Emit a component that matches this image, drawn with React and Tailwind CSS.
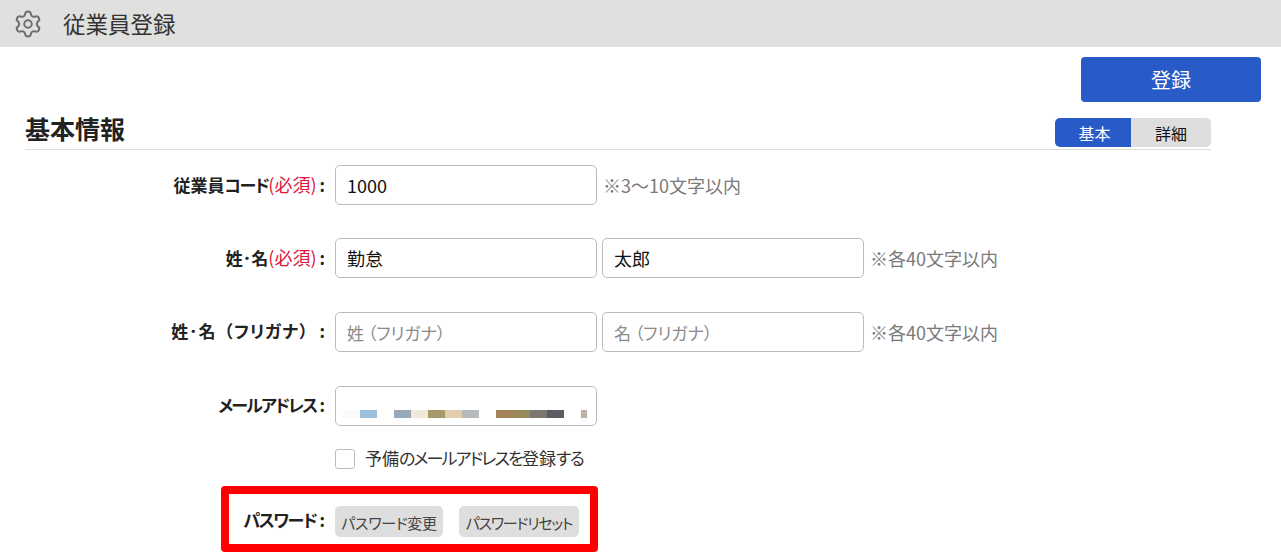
import React from 'react';
import { Settings } from 'lucide-react';

const inputCls = "w-[262px] h-10 box-border border border-[#bdbdbd] rounded-[5px] px-[11px] pb-[1px] text-[18px] text-[#111] placeholder:text-[#8a8a8a] placeholder:text-[17px] outline-none bg-white";

const mosaic = [
  ['w-[17px]', 'bg-[#f7fbfe]'],
  ['w-[17px]', 'bg-[#9dbfd9]'],
  ['w-[17px]', 'bg-white'],
  ['w-[17px]', 'bg-[#97a9b8]'],
  ['w-[17px]', 'bg-[#f0e8d9]'],
  ['w-[17px]', 'bg-[#a69a6d]'],
  ['w-[17px]', 'bg-[#e2cdaa]'],
  ['w-[17px]', 'bg-[#b6babd]'],
  ['w-[17px]', 'bg-white'],
  ['w-[17px]', 'bg-[#a5835b]'],
  ['w-[17px]', 'bg-[#958a58]'],
  ['w-[17px]', 'bg-[#7b7670]'],
  ['w-[17px]', 'bg-[#5d5c64]'],
  ['w-[17px]', 'bg-white'],
  ['w-[6px]', 'bg-[#bdb3a3]'],
];

// kana in the reference font is much narrower than in Noto
function Kana({ children }){
  return <span className="tracking-[-1.4px]">{children}</span>;
}

function Paren({ children }){
  return <span className="[font-feature-settings:normal]">{children}</span>;
}

function Row({ label, required, className, labelCls = '-mt-[2px]', children }){
  return (
    <div className={`flex items-center ${className}`}>
      <label className={`w-[325px] text-right font-bold text-[17px] text-[#222] whitespace-nowrap ${labelCls}`}>
        {label}
        {required && <span className="font-normal text-[18px] text-[#e0143c]">(必須)</span>}
        <span className="ml-[3px]">:</span>
      </label>
      <div className="ml-[10px] flex items-center gap-[5px]">{children}</div>
    </div>
  );
}

function Note({ children }){
  return <span className="ml-[1px] text-[18px] text-[#7a7a7a] whitespace-nowrap">{children}</span>;
}

export default function App(){
  return (
    <div className="relative w-[1281px] h-[553px] overflow-hidden bg-white font-['Noto_Sans_CJK_JP','Noto_Sans',sans-serif] [font-feature-settings:'palt']">
      <header className="h-[47px] bg-[#e0e0de] flex items-center pl-[13px]">
        <Settings size={30} strokeWidth={1.6} color="#6f6f6f" className="mt-[1px]" />
        <h1 className="ml-[20px] text-[22.5px] text-[#333] font-normal">従業員登録</h1>
      </header>

      <div className="flex justify-end pr-5 pt-[10px]">
        <button className="w-[180px] h-[45px] rounded-[4px] bg-[#295bc8] text-white text-[20px]">登録</button>
      </div>

      <div className="mx-[25px] w-[1186px] mt-4 h-[32px] border-b border-[#dddddd] flex items-start justify-between">
        <h2 className="text-[25px] leading-[26px] font-bold text-[#222] -mt-[3px]">基本情報</h2>
        <div className="flex w-[156px] h-[29px] rounded-[5px] overflow-hidden text-[16px]">
          <div className="w-[76px] pl-[3px] bg-[#295bc8] text-white flex items-center justify-center">基本</div>
          <div className="flex-1 bg-[#dedede] text-[#111] flex items-center justify-center">詳細</div>
        </div>
      </div>

      <Row label={<>従業員<Kana>コード</Kana></>} required className="mt-[15px]">
        <input className={inputCls} defaultValue="1000" />
        <Note>※3〜10文字以内</Note>
      </Row>
      <Row label="姓･名" required className="mt-[33px]">
        <input className={inputCls} defaultValue="勤怠" />
        <input className={inputCls} defaultValue="太郎" />
        <Note>※各40文字以内</Note>
      </Row>
      <Row label={<span className="tracking-[0.8px]">姓･名<Paren>（</Paren>フリガナ<Paren>）</Paren></span>} className="mt-[34px]">
        <input className={inputCls} placeholder="姓 （フリガナ）" />
        <input className={inputCls} placeholder="名 （フリガナ）" />
        <Note>※各40文字以内</Note>
      </Row>
      <Row label={<span className="tracking-[-1.8px]">メールアドレス</span>} className="mt-[34px]">
        <div className="w-[262px] h-10 box-border border border-[#bdbdbd] rounded-[5px] bg-white pl-[7px] pt-[23px]">
          <div className="flex h-2">
            {mosaic.map((m, i) => <div key={i} className={`${m[0]} ${m[1]}`} />)}
          </div>
        </div>
      </Row>

      <div className="ml-[335px] mt-[23px] flex items-center">
        <input type="checkbox" className="appearance-none w-5 h-5 border border-[#bdbdbd] rounded-[3px] bg-white" />
        <span className="ml-[10px] -mt-[2px] text-[17px] leading-5 text-[#333] whitespace-nowrap">
          予備<span className="tracking-[-1.8px]">のメールアドレスを</span>登録<span className="tracking-[-1.8px]">する</span>
        </span>
      </div>

      <Row label={<Kana>パスワード</Kana>} labelCls="-mt-[3px]" className="mt-[37px]">
        <button className="w-[108px] h-[31px] pt-[3px] rounded-[5px] bg-[#dedede] text-[#444] text-[15px] tracking-[-0.3px] whitespace-nowrap">パスワード変更</button>
        <button className="ml-[11px] w-[120px] h-[31px] pt-[3px] rounded-[5px] bg-[#dedede] text-[#444] text-[15px] tracking-[-1.2px] whitespace-nowrap">パスワードリセット</button>
      </Row>

      {/* annotation box */}
      <div className="absolute left-[221px] top-[486px] w-[377px] h-[66px] border-[8px] border-[#ff0000] rounded-[4px]" />
    </div>
  );
}
